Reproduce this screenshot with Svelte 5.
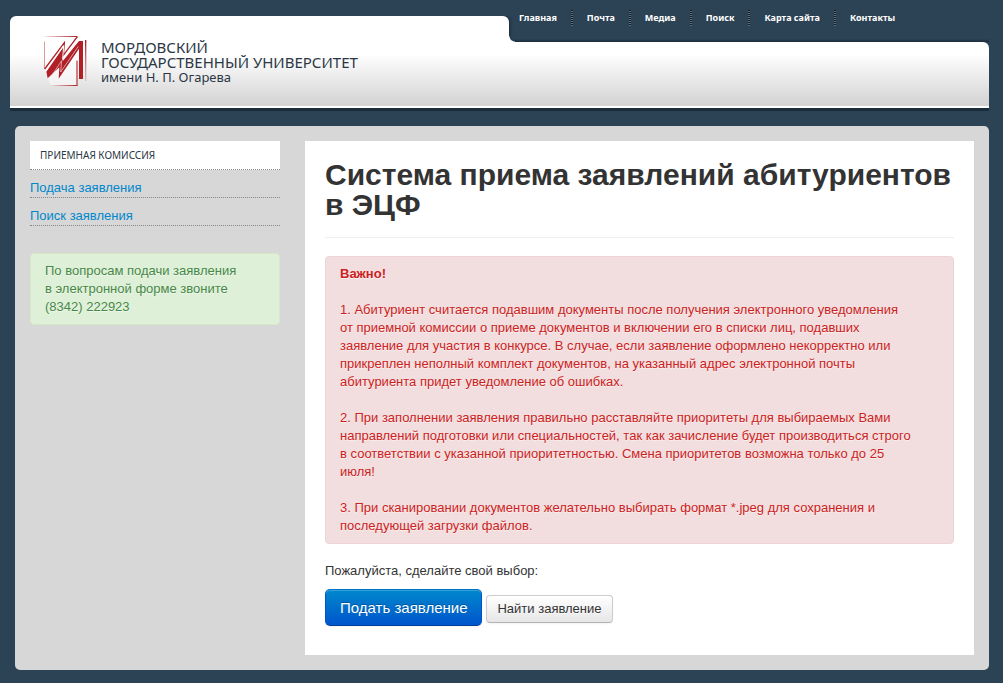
<script lang="ts">
	const nav = ['Главная', 'Почта', 'Медиа', 'Поиск', 'Карта сайта', 'Контакты'];
	const menu = ['Подача заявления', 'Поиск заявления'];
	const notes = [
		'1. Абитуриент считается подавшим документы после получения электронного уведомления от\u00a0приемной комиссии о приеме документов и включении его в списки лиц, подавших заявление для участия в конкурсе. В случае, если заявление оформлено некорректно или прикреплен неполный комплект документов, на указанный адрес электронной почты абитуриента придет уведомление об ошибках.',
		'2. При заполнении заявления правильно расставляйте приоритеты для выбираемых Вами направлений подготовки или специальностей, так как зачисление будет производиться строго в соответствии с указанной приоритетностью. Смена приоритетов возможна только до 25 июля!',
		'3. При сканировании документов желательно выбирать формат *.jpeg для сохранения и последующей загрузки файлов.'
	];
</script>

<div class="page">
	<header class="header">
		<div class="tab"></div>
		<nav class="nav">
			{#each nav as item}
				<a href="/">{item}</a>
			{/each}
		</nav>
		<div class="band"></div>
		<a class="brand" href="/">
			<svg class="logo" viewBox="0 0 180 186" aria-hidden="true">
				<defs>
					<linearGradient id="fadeLeft" x1="0" x2="1" y1="0" y2="0">
						<stop offset="0" stop-color="#b02026" stop-opacity="0.1" />
						<stop offset="1" stop-color="#b02026" />
					</linearGradient>
					<linearGradient id="fadeDown" x1="0" x2="0" y1="0" y2="1">
						<stop offset="0" stop-color="#a81c22" />
						<stop offset="1" stop-color="#b02026" stop-opacity="0.2" />
					</linearGradient>
				</defs>
				<path d="M30 36 L48 21 L127 21 L127 168 L48 168 L30 125 Z" fill="#fff" opacity="0.5" />
				<rect x="28" y="18" width="99" height="3" fill="url(#fadeLeft)" />
				<rect x="27" y="35" width="3" height="82" fill="#c9565a" opacity="0.6" />
				<rect x="150" y="30" width="4" height="123" fill="url(#fadeDown)" />
				<rect x="48" y="165" width="79" height="3" fill="url(#fadeLeft)" />
				<rect x="124" y="92" width="4" height="76" fill="#b84a4e" />
				<path d="M29 117 L88 38 L85 76 L127 20" fill="none" stroke="#b02026" stroke-width="4" />
				<path d="M34 125 L86 50 L83 94 L132 33 L144 33 L144 147 L132 147 L132 56 L71 146 L73 112 L38 145 Z" fill="#b02026" />
				<path d="M33 122 L86 47 L83 88 L130 30" fill="none" stroke="#fff" stroke-width="3" />
				<path d="M48 140 L80 92 L77 126 L130 49" fill="none" stroke="#f3dcdc" stroke-width="2" />
			</svg>
			<span class="title">
				<span>МОРДОВСКИЙ</span>
				<span>ГОСУДАРСТВЕННЫЙ УНИВЕРСИТЕТ</span>
				<span class="named">имени Н. П. Огарева</span>
			</span>
		</a>
	</header>

	<div class="content">
		<aside class="sidebar">
			<h2>ПРИЕМНАЯ КОМИССИЯ</h2>
			<ul>
				{#each menu as item}
					<li><a href="/">{item}</a></li>
				{/each}
			</ul>
			<div class="alert alert-success">
				По вопросам подачи заявления<br />в электронной форме звоните<br />(8342) 222923
			</div>
		</aside>

		<main class="main">
			<h1>Система приема заявлений абитуриентов в ЭЦФ</h1>
			<div class="alert alert-error">
				<p><strong>Важно!</strong></p>
				{#each notes as note}
					<p>{note}</p>
				{/each}
			</div>
			<p class="prompt">Пожалуйста, сделайте свой выбор:</p>
			<div class="actions">
				<button type="button" class="btn btn-primary">Подать заявление</button>
				<button type="button" class="btn">Найти заявление</button>
			</div>
		</main>
	</div>
</div>

<style>
	:global(body) {
		background: #2c4255;
		color: #333;
		font: 13px/18px 'Liberation Sans', Arial, sans-serif;
	}

	a {
		color: #08c;
		text-decoration: none;
	}

	p {
		margin: 0;
	}

	.page {
		padding: 0 14px 13px 10px;
	}

	.header {
		display: grid;
		grid-template-columns: 499px 1fr;
		grid-template-rows: 42px 64px;
		border-bottom: 2px solid #fff;
		box-shadow: 0 3px 0 #1a2b39;
	}

	.tab {
		grid-area: 1 / 1;
		margin-top: 16px;
		background: #fff;
		border-radius: 6px 6px 0 0;
		box-shadow: 1px 0 3px #1a2b39;
		clip-path: inset(0 -4px 0 0);
	}

	/* the first layer rounds the inner corner between the tab and the band */
	.nav {
		grid-area: 1 / 2;
		display: flex;
		align-items: flex-start;
		padding-top: 10px;
		background:
			radial-gradient(circle at 100% 0, transparent 5px, #fff 6px) left bottom / 6px 6px no-repeat,
			linear-gradient(transparent, #1a2b39) 4px 100% / 100% 3px no-repeat;
		z-index: 1;
	}

	.nav a {
		padding: 0 16px 0 14px;
		background: repeating-linear-gradient(#111c26 0 1px, #60707e 1px 2px) right / 2px 100% no-repeat;
		color: #fff;
		font: bold 9px/16px 'Noto Sans', sans-serif;
	}

	.nav a:first-child {
		padding-left: 10px;
	}

	.nav a:last-child {
		background: none;
	}

	.band {
		grid-area: 2 / 1 / 3 / 3;
		background: linear-gradient(#fff 12px, #d2d2d2);
		border-top-right-radius: 6px;
	}

	.brand {
		grid-area: 1 / 1 / 3 / 2;
		display: flex;
		align-items: flex-start;
		padding: 30px 0 0 25px;
		z-index: 1;
	}

	.logo {
		width: 60px;
		height: 62px;
	}

	.title {
		display: flex;
		flex-direction: column;
		padding: 10px 0 0 6px;
		color: #2b3745;
		font: 15px/15px 'Noto Sans', sans-serif;
		white-space: nowrap;
	}

	.named {
		font-size: 13px;
	}

	.content {
		display: flex;
		gap: 25px;
		margin: 18px 0 0 5px;
		padding: 15px;
		background: #d7d7d7;
		border-radius: 5px;
	}

	.sidebar {
		flex: 0 0 250px;
	}

	.sidebar h2 {
		margin: 0;
		padding: 5px 10px;
		background: #fff;
		border-bottom: 1px dotted #888;
		color: #2b3745;
		font: 10px/18px 'Noto Sans', sans-serif;
	}

	.sidebar ul {
		margin: 0 0 27px;
		padding: 0;
		list-style: none;
	}

	.sidebar li {
		padding-top: 9px;
		border-bottom: 1px dotted #888;
	}

	.main {
		flex: 1;
		min-width: 0;
		padding: 19px 20px 29px;
		background: #fff;
	}

	h1 {
		margin: 0 0 18px;
		padding-bottom: 17px;
		border-bottom: 1px solid #eee;
		font-size: 30px;
		line-height: 30px;
	}

	.alert {
		padding: 8px 35px 8px 14px;
		border: 1px solid;
		border-radius: 4px;
		text-shadow: 0 1px 0 rgba(255, 255, 255, 0.5);
	}

	.alert p + p {
		margin-top: 18px;
	}

	.alert-success {
		background: #dff0d8;
		border-color: #d6e9c6;
		color: #468847;
	}

	.alert-error {
		margin-bottom: 18px;
		background: #f2dede;
		border-color: #eed3d7;
		color: #c22;
	}

	.prompt {
		margin-bottom: 9px;
	}

	.actions {
		display: flex;
		align-items: baseline;
		gap: 4px;
	}

	.btn {
		padding: 4px 10px;
		border: 1px solid #ccc;
		border-bottom-color: #b3b3b3;
		border-radius: 4px;
		background: linear-gradient(#fff, #e6e6e6);
		box-shadow: inset 0 1px 0 rgba(255, 255, 255, 0.2), 0 1px 2px rgba(0, 0, 0, 0.05);
		color: #333;
		font: 13px/18px 'Liberation Sans', Arial, sans-serif;
		text-shadow: 0 1px 1px rgba(255, 255, 255, 0.75);
		cursor: pointer;
	}

	.btn-primary {
		padding: 9px 14px;
		border-color: #0074cc #05c #003f99;
		border-radius: 5px;
		background: linear-gradient(#08c, #05c);
		color: #fff;
		font-size: 15px;
		line-height: 17px;
		text-shadow: 0 -1px 0 rgba(0, 0, 0, 0.25);
	}
</style>
